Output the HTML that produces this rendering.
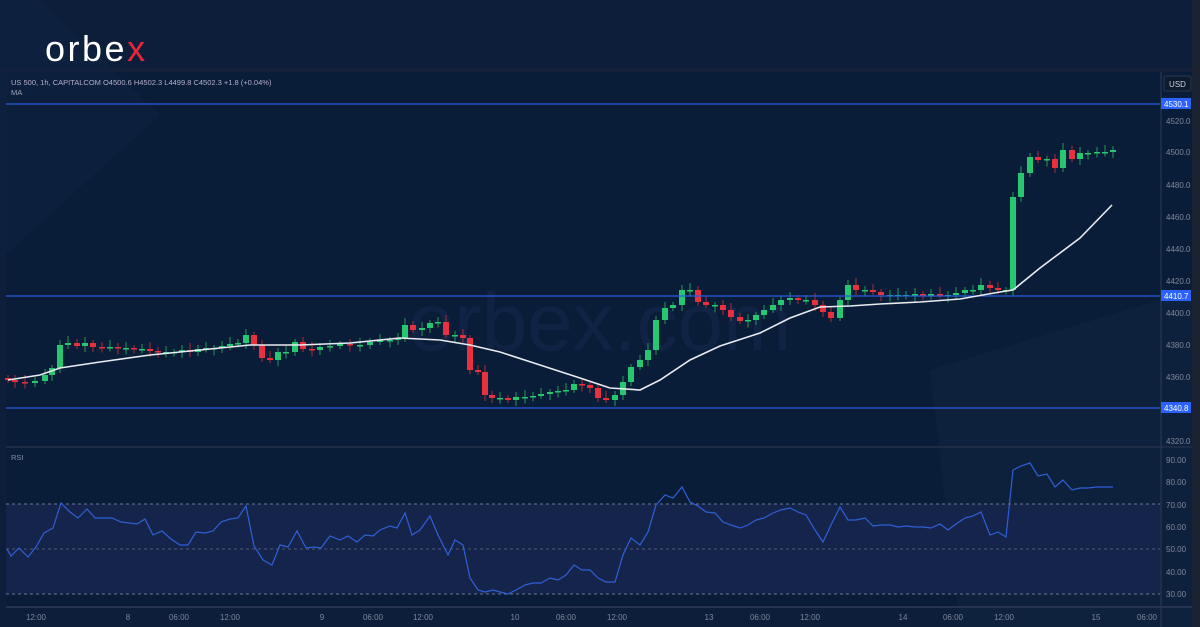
<!DOCTYPE html><html><head><meta charset="utf-8"><style>
html,body{margin:0;padding:0;background:#0b1c36;width:1200px;height:627px;overflow:hidden;font-family:"Liberation Sans",sans-serif}
svg{display:block}
</style></head><body>
<svg id="s" width="1200" height="627" xmlns="http://www.w3.org/2000/svg" font-family="Liberation Sans, sans-serif">
<rect width="1200" height="627" fill="#0c1e3a"/>
<rect x="1192" y="0" width="8" height="627" fill="#1b2231"/>
<rect x="0" y="68" width="1192" height="4" fill="#15213a"/>
<rect x="6" y="72" width="1186" height="536" fill="#0a1d38"/>
<polygon points="0,0 40,0 160,115 0,260" fill="#0e2240" opacity="0.5"/>
<polygon points="930,370 1192,290 1192,627 960,627" fill="#10243f" opacity="0.6"/>
<rect x="6" y="504" width="1154" height="90" fill="#15244a"/>
<line x1="6" y1="504" x2="1160" y2="504" stroke="#6b7895" stroke-dasharray="3,3" stroke-width="1"/>
<line x1="6" y1="549" x2="1160" y2="549" stroke="#4d5a78" stroke-dasharray="3,3" stroke-width="1"/>
<line x1="6" y1="594" x2="1160" y2="594" stroke="#6b7895" stroke-dasharray="3,3" stroke-width="1"/>
<line x1="6" y1="447" x2="1192" y2="447" stroke="#1d2b44" stroke-width="2"/>
<line x1="6" y1="607" x2="1192" y2="607" stroke="#243350" stroke-width="2"/>
<line x1="1161" y1="72" x2="1161" y2="627" stroke="#2b3a55" stroke-width="1"/>
<text x="600" y="350" font-size="82" fill="#13264a" text-anchor="middle" opacity="0.7">orbex.com</text>
<g id="c"></g>
<line x1="6" y1="104" x2="1160" y2="104" stroke="#2a5ce0" stroke-width="1.3"/>
<line x1="6" y1="296" x2="1160" y2="296" stroke="#2a5ce0" stroke-width="1.3"/>
<line x1="6" y1="408" x2="1160" y2="408" stroke="#2a5ce0" stroke-width="1.3"/>
<path id="ma" fill="none" stroke="#e8ebf0" stroke-width="1.6"/>
<path id="rsi" fill="none" stroke="#2f5fd8" stroke-width="1.2"/>
<text x="45" y="61" font-size="36" fill="#ffffff" letter-spacing="2.5">orbe<tspan fill="#e8263a">x</tspan></text>
<text x="11" y="85" font-size="7.5" fill="#b4aecb">US 500, 1h, CAPITALCOM  O4500.6  H4502.3  L4499.8  C4502.3  +1.8 (+0.04%)</text>
<text x="11" y="95" font-size="7.5" fill="#9aa5b8">MA</text>
<text x="11" y="460" font-size="7.5" fill="#8792a8">RSI</text>
<rect x="1164" y="76" width="27" height="15" rx="2" fill="#0e1a2e" stroke="#2c3850"/>
<text x="1177.5" y="87" font-size="8" fill="#c8cfdc" text-anchor="middle">USD</text>
<g font-size="8" fill="#7d879b">
<text x="1166" y="124">4520.0</text><text x="1166" y="155">4500.0</text><text x="1166" y="188">4480.0</text><text x="1166" y="220">4460.0</text><text x="1166" y="252">4440.0</text><text x="1166" y="284">4420.0</text><text x="1166" y="316">4400.0</text><text x="1166" y="348">4380.0</text><text x="1166" y="380">4360.0</text><text x="1166" y="444">4320.0</text>
<text x="1166" y="463">90.00</text><text x="1166" y="485">80.00</text><text x="1166" y="508">70.00</text><text x="1166" y="530">60.00</text><text x="1166" y="552">50.00</text><text x="1166" y="575">40.00</text><text x="1166" y="597">30.00</text>
</g>
<g font-size="8" fill="#ffffff">
<rect x="1161" y="98" width="30" height="11" fill="#2962ff"/><text x="1164" y="107">4530.1</text>
<rect x="1161" y="290" width="30" height="11" fill="#2962ff"/><text x="1164" y="299">4410.7</text>
<rect x="1161" y="402" width="30" height="11" fill="#2962ff"/><text x="1164" y="411">4340.8</text>
</g>
<g font-size="8" fill="#7d879b" text-anchor="middle">
<text x="36" y="620">12:00</text><text x="128" y="620">8</text><text x="179" y="620">06:00</text><text x="230" y="620">12:00</text><text x="322" y="620">9</text><text x="373" y="620">06:00</text><text x="423" y="620">12:00</text><text x="515" y="620">10</text><text x="566" y="620">06:00</text><text x="617" y="620">12:00</text><text x="709" y="620">13</text><text x="760" y="620">06:00</text><text x="810" y="620">12:00</text><text x="903" y="620">14</text><text x="953" y="620">06:00</text><text x="1004" y="620">12:00</text><text x="1096" y="620">15</text><text x="1147" y="620">06:00</text>
</g>
</svg>
<script>
var C=[[8,380],[15,382],[25,383],[35,381],[45,375],[52,368],[60,345],[68,343],[77,346],[85,343],[93,347],[102,348],[110,347],[118,348],[126,348],[134,349],[142,349],[150,351],[158,352],[166,352],[174,352],[182,350],[190,352],[198,349],[206,348],[214,348],[222,346],[230,344],[238,343],[246,335],[254,345],[262,358],[270,360],[278,352],[286,352],[295,342],[303,349],[312,350],[320,347],[330,346],[340,344],[350,345],[360,345],[370,342],[380,340],[390,340],[398,338],[405,325],[413,330],[422,328],[430,323],[438,322],[446,335],[455,335],[463,338],[470,370],[478,372],[485,395],[492,398],[500,398],[508,400],[516,397],[525,397],[533,396],[541,394],[550,392],[558,391],[566,390],[574,384],[582,385],[590,388],[598,398],[606,400],[615,395],[623,382],[631,367],[640,360],[648,350],[656,320],[665,308],[673,305],[682,290],[690,290],[698,302],[706,305],[715,305],[723,310],[731,317],[740,321],[748,320],[756,315],[764,310],[773,305],[781,300],[790,298],[798,300],[806,300],[815,305],[823,312],[831,318],[840,300],[848,285],[856,290],[865,290],[873,292],[881,295],[890,295],[898,295],[906,295],[915,294],[923,295],[931,294],[940,295],[948,295],[956,293],[965,290],[973,290],[981,285],[990,288],[998,290],[1006,290],[1013,197],[1021,173],[1030,157],[1038,160],[1047,159],[1055,168],[1063,150],[1072,159],[1080,153],[1088,153],[1097,152],[1105,152],[1113,150]];
var g=document.getElementById('c'),h='',po=378;
for(var i=0;i<C.length;i++){var x=C[i][0],c=C[i][1],o=po;po=c;var up=c<=o;var col=up?'#26c770':'#e8313f';var t=Math.min(o,c),b=Math.max(o,c);if(b-t<1.5){b=t+1.5;}
var wt=t-3-(i*7%5),wb=b+3+(i*3%4);
h+='<line x1="'+x+'" y1="'+wt+'" x2="'+x+'" y2="'+wb+'" stroke="'+(up?'#1d9a58':'#b02a37')+'" stroke-width="1"/>';
h+='<rect x="'+(x-3)+'" y="'+t+'" width="6" height="'+(b-t)+'" fill="'+col+'"/>';}
g.innerHTML=h;
var M=[[8,380],[40,375],[60,368],[100,362],[150,355],[200,350],[250,345],[300,345],[350,343],[400,338],[440,340],[470,345],[500,352],[540,365],[580,378],[610,388],[640,390],[660,380],[690,360],[720,346],[760,333],[790,318],[820,307],[850,306],[880,304],[920,302],[960,299],[1000,292],[1013,290],[1040,268],[1080,238],[1112,205]];
document.getElementById('ma').setAttribute('d','M'+M.map(function(p){return p.join(',')}).join(' L'));
var R=[[7,549],[11,556],[19,548],[28,557],[36,547],[44,533],[53,528],[61,503],[70,512],[78,518],[87,509],[95,518],[112,518],[121,522],[137,524],[145,519],[153,535],[162,531],[171,539],[180,545],[188,545],[196,532],[205,533],[213,531],[221,522],[230,519],[238,518],[246,506],[254,546],[263,560],[272,565],[280,545],[288,547],[297,531],[306,548],[314,547],[321,548],[330,536],[340,540],[348,536],[357,542],[365,535],[373,536],[380,530],[390,526],[397,528],[405,513],[412,535],[420,530],[430,516],[438,535],[448,555],[455,540],[463,545],[470,578],[478,590],[485,592],[493,590],[500,592],[508,594],[516,590],[525,585],[533,583],[541,583],[550,578],[558,580],[566,575],[574,565],[582,570],[590,570],[598,578],[606,582],[615,582],[623,555],[631,538],[640,545],[648,532],[656,505],[665,495],[673,498],[682,487],[690,502],[698,506],[706,512],[715,513],[723,522],[731,525],[740,528],[748,525],[756,520],[764,518],[773,513],[781,510],[790,508],[798,512],[806,515],[815,530],[823,542],[831,525],[840,507],[848,520],[856,520],[865,518],[873,526],[881,525],[890,525],[898,527],[906,526],[915,527],[923,527],[931,528],[940,524],[948,530],[956,524],[965,518],[973,516],[981,512],[990,535],[998,532],[1006,537],[1013,470],[1021,466],[1030,463],[1038,476],[1047,474],[1055,487],[1063,480],[1072,490],[1080,488],[1088,488],[1097,487],[1105,487],[1113,487]];
document.getElementById('rsi').setAttribute('d','M'+R.map(function(p){return p.join(',')}).join(' L'));
</script>
</body></html>
